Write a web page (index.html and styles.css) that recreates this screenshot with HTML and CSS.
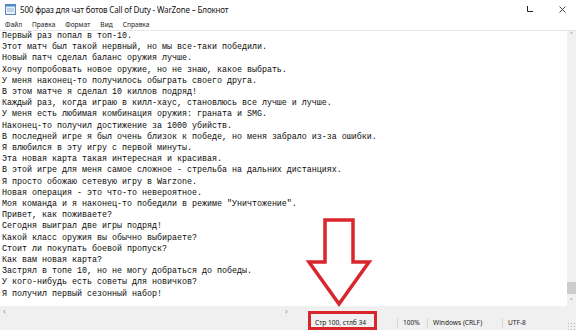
FILE: index.html
```html
<!DOCTYPE html>
<html lang="ru">
<head>
<meta charset="utf-8">
<title>Блокнот</title>
<link rel="stylesheet" href="styles.css">
</head>
<body>
<div class="window">
  <div class="titlebar">
    <svg class="app-icon" width="11" height="11" viewBox="0 0 11 11">
      <rect x="0.5" y="0.5" width="10" height="10" fill="#e8f2fb" stroke="#5a87b5"/>
      <rect x="0.5" y="0.5" width="10" height="2" fill="#4f8cc9"/>
      <line x1="2" y1="5" x2="9" y2="5" stroke="#9fb3c8"/>
      <line x1="2" y1="7" x2="9" y2="7" stroke="#9fb3c8"/>
    </svg>
    <span class="title">500 фраз для чат ботов Call of Duty - WarZone – Блокнот</span>
    <div class="controls">
      <svg class="ctl" width="6" height="6" viewBox="0 0 6 6"><path d="M0.5 0 V5.5 H6" fill="none" stroke="#222"/></svg>
      <svg class="ctl close" width="7" height="7" viewBox="0 0 7 7"><path d="M0.5 0.5 L6.5 6.5 M6.5 0.5 L0.5 6.5" stroke="#333" stroke-width="0.9"/></svg>
    </div>
  </div>
  <div class="menubar">
    <span>Файл</span><span>Правка</span><span>Формат</span><span>Вид</span><span>Справка</span>
  </div>
  <div class="main">
    <pre class="text">Первый раз попал в топ-10.
Этот матч был такой нервный, но мы все-таки победили.
Новый патч сделал баланс оружия лучше.
Хочу попробовать новое оружие, но не знаю, какое выбрать.
У меня наконец-то получилось обыграть своего друга.
В этом матче я сделал 10 киллов подряд!
Каждый раз, когда играю в килл-хаус, становлюсь все лучше и лучше.
У меня есть любимая комбинация оружия: граната и SMG.
Наконец-то получил достижение за 1000 убийств.
В последней игре я был очень близок к победе, но меня забрало из-за ошибки.
Я влюбился в эту игру с первой минуты.
Эта новая карта такая интересная и красивая.
В этой игре для меня самое сложное - стрельба на дальних дистанциях.
Я просто обожаю сетевую игру в Warzone.
Новая операция - это что-то невероятное.
Моя команда и я наконец-то победили в режиме "Уничтожение".
Привет, как поживаете?
Сегодня выиграл две игры подряд!
Какой класс оружия вы обычно выбираете?
Стоит ли покупать боевой пропуск?
Как вам новая карта?
Застрял в топе 10, но не могу добраться до победы.
У кого-нибудь есть советы для новичков?
Я получил первый сезонный набор!</pre>
    <div class="vscroll">
      <span class="arrow up">&#x2C4;</span>
      <div class="track"><div class="thumb"></div></div>
      <span class="arrow down">&#x2C5;</span>
    </div>
  </div>
  <div class="hscroll">
    <span class="harrow">&lsaquo;</span>
    <span class="harrow">&rsaquo;</span>
    <div class="corner"></div>
  </div>
  <div class="statusbar">
    <div class="cell pos">Стр 100, стлб 34</div>
    <div class="cell zoom">100%</div>
    <div class="cell eol">Windows (CRLF)</div>
    <div class="cell enc">UTF-8</div>
    <div class="grip"></div>
  </div>
  <div class="redbox"></div>
  <svg class="bigarrow" width="80" height="100" viewBox="0 0 80 100">
    <polygon points="25,10 53,10 53,52 69,52 39,94 9,52 25,52" fill="#fff" stroke="#d8262c" stroke-width="3.5" stroke-linejoin="miter"/>
  </svg>
</div>
</body>
</html>
```

FILE: styles.css
```css
* { box-sizing: border-box; }
html, body { margin: 0; padding: 0; }
body {
  width: 576px;
  height: 330px;
  overflow: hidden;
  background: #fff;
  font-family: "Noto Sans", "Liberation Sans", sans-serif;
}
.window {
  position: relative;
  width: 576px;
  height: 330px;
  display: flex;
  flex-direction: column;
}
.titlebar {
  height: 18px;
  display: flex;
  align-items: center;
  padding-left: 5px;
  background: #fff;
}
.app-icon { flex: none; margin-right: 4px; }
.title {
  font-size: 8px;
  color: #111;
  letter-spacing: -0.15px;
  white-space: nowrap;
}
.controls {
  margin-left: auto;
  display: flex;
  align-items: center;
  gap: 26px;
  padding-right: 10px;
}
.menubar {
  height: 13px;
  display: flex;
  align-items: center;
  gap: 10px;
  padding-left: 5px;
  font-size: 6.6px;
  color: #222;
  border-bottom: 1px solid #e6e6e6;
}
.main {
  height: 275px;
  display: flex;
}
.text {
  flex: 1;
  margin: 0;
  padding: 0 0 0 2px;
  font-family: "Liberation Mono", "DejaVu Sans Mono", monospace;
  font-size: 8.33px;
  line-height: 11.2px;
  color: #0a0a0a;
  white-space: pre;
  overflow: hidden;
}
.vscroll {
  width: 9px;
  flex: none;
  background: #f0f0f0;
  display: flex;
  flex-direction: column;
  align-items: center;
}
.arrow {
  font-size: 8px;
  line-height: 9px;
  height: 9px;
  color: #555;
}
.track {
  flex: 1;
  width: 100%;
  display: flex;
  flex-direction: column;
  justify-content: flex-end;
}
.thumb {
  width: 100%;
  height: 12px;
  margin-bottom: 3px;
  background: #cdcdcd;
}
.hscroll {
  height: 10px;
  background: #f0f0f0;
  display: flex;
  align-items: center;
  justify-content: space-between;
  padding-left: 3px;
}
.harrow {
  font-size: 9px;
  line-height: 10px;
  color: #999;
}
.corner {
  width: 9px;
  height: 10px;
  background: #f0f0f0;
}
.statusbar {
  height: 14px;
  background: #f0f0f0;
  display: flex;
  align-items: center;
  padding-left: 306px;
  font-size: 6.6px;
  color: #222;
}
.cell {
  height: 10px;
  line-height: 10px;
  padding-left: 5px;
  white-space: nowrap;
}
.pos { width: 91px; padding-left: 9px; }
.zoom { width: 30px; border-left: 1px solid #d6d6d6; }
.eol { width: 75px; border-left: 1px solid #d6d6d6; }
.enc { width: 50px; border-left: 1px solid #d6d6d6; }
.grip {
  margin-left: auto;
  width: 8px;
  height: 8px;
  margin-right: 1px;
  align-self: flex-end;
  background: radial-gradient(circle, #b5b5b5 0.7px, transparent 0.9px) 0 0 / 3px 3px;
}
.redbox {
  position: absolute;
  left: 308px;
  top: 311px;
  width: 69px;
  height: 19px;
  border: 3px solid #d8262c;
}
.bigarrow {
  position: absolute;
  left: 300px;
  top: 210px;
}
```
